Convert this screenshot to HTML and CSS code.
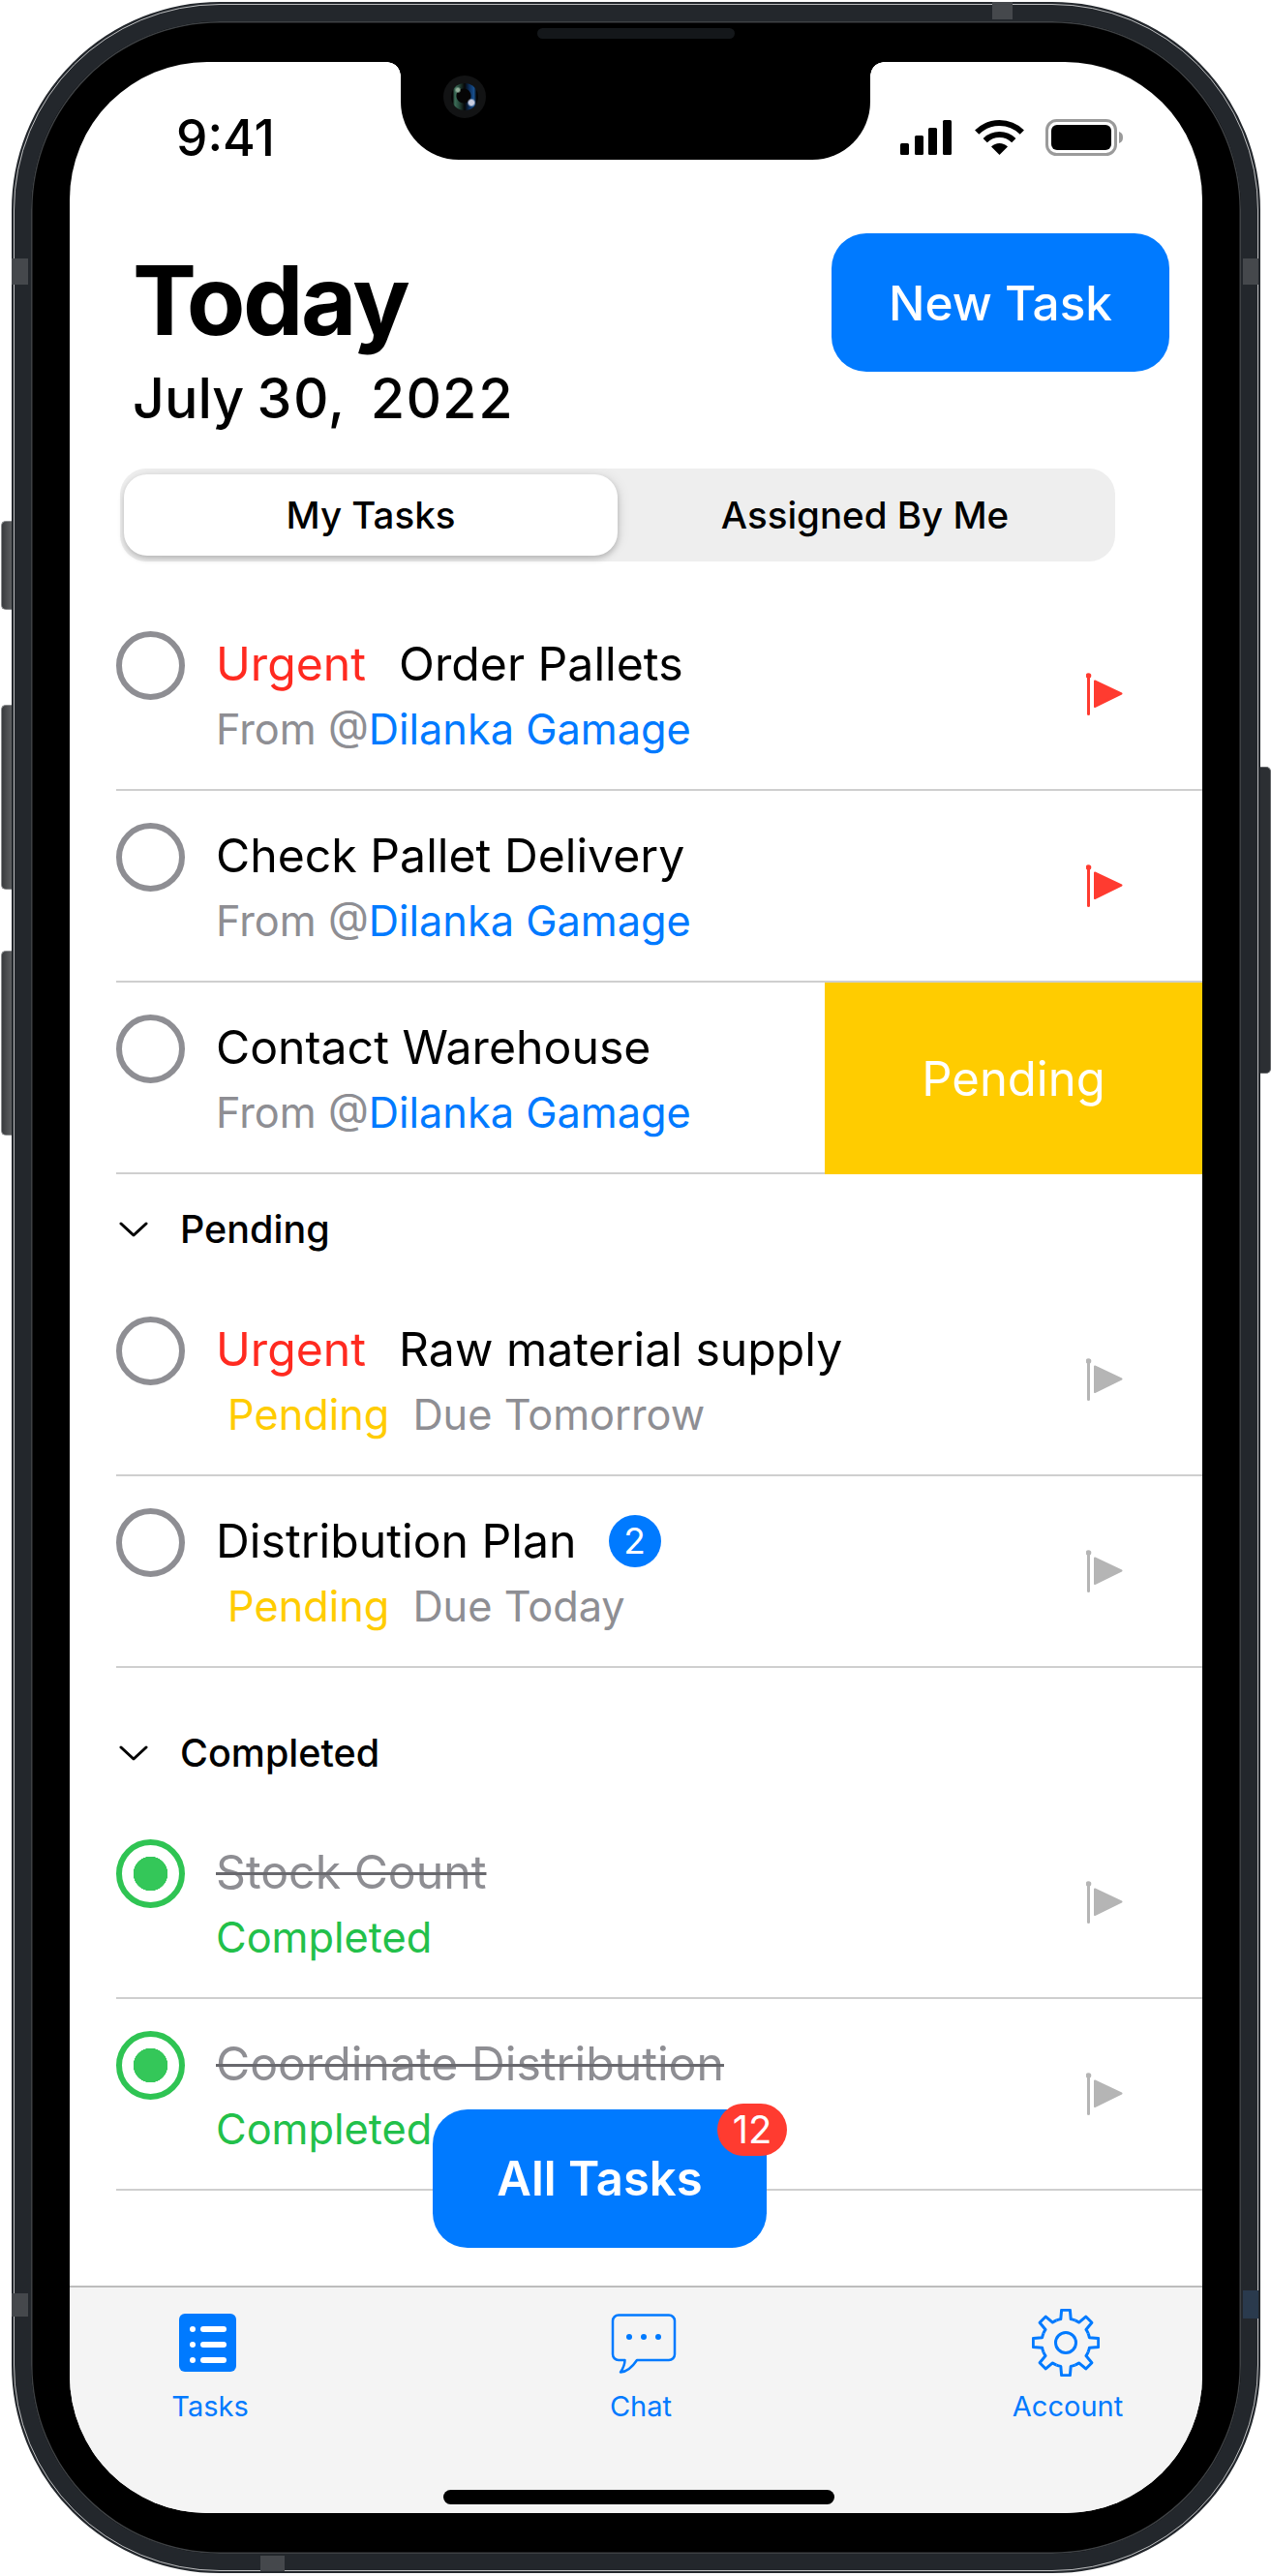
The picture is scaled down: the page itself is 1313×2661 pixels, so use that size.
FILE: index.html
```html
<!DOCTYPE html>
<html lang="en">
<head>
    <meta charset="UTF-8">
    <title>Today - Tasks</title>
    <link rel="stylesheet" href="styles.css">
</head>
<body>
    <div class="phone">
        <span class="side-btn side-mute"></span>
        <span class="side-btn side-up"></span>
        <span class="side-btn side-down"></span>
        <span class="side-btn side-power"></span>
        <span class="band band-top"></span>
        <span class="band band-left1"></span>
        <span class="band band-left2"></span>
        <span class="band band-right1"></span>
        <span class="band band-right2"></span>
        <span class="band band-bottom"></span>
        <span class="speaker"></span>

        <div class="screen">
            <div class="notch"><span class="camera"></span></div>

            <div class="status-bar">
                <span class="time">9:41</span>
                <div class="status-icons">
                    <svg class="signal" width="53" height="36" viewBox="0 0 53 36">
                        <rect x="0" y="24" width="9" height="12" rx="1.5"/>
                        <rect x="15" y="16" width="9" height="20" rx="1.5"/>
                        <rect x="29" y="8" width="9" height="28" rx="1.5"/>
                        <rect x="44" y="0" width="9" height="36" rx="1.5"/>
                    </svg>
                    <svg class="wifi" width="51" height="36" viewBox="0 0 51 36">
                        <path d="M2.2 12.7A33 33 0 0 1 48.8 12.7" fill="none" stroke="#000" stroke-width="6"/>
                        <path d="M10.7 21.2A21 21 0 0 1 40.3 21.2" fill="none" stroke="#000" stroke-width="6"/>
                        <path d="M25.5 36L17 27.5A12 12 0 0 1 34 27.5Z"/>
                    </svg>
                    <svg class="battery" width="81" height="38" viewBox="0 0 81 38">
                        <rect x="1.5" y="1.5" width="71" height="35" rx="10" fill="none" stroke="#9a9a9a" stroke-width="3"/>
                        <rect x="6" y="6" width="62" height="26" rx="6"/>
                        <path d="M76 13c3 1 4 3 4 6s-1 5-4 6z" fill="#9a9a9a"/>
                    </svg>
                </div>
            </div>

            <div class="header">
                <div class="heading">
                    <h1>Today</h1>
                    <p class="date">July 30,&nbsp; 2022</p>
                </div>
                <button class="new-task">New Task</button>
            </div>

            <div class="segment">
                <div class="seg-item active">My Tasks</div>
                <div class="seg-item">Assigned By Me</div>
            </div>

            <div class="list">
                <div class="row">
                    <span class="check"></span>
                    <div class="text">
                        <div class="title"><span class="urgent">Urgent</span>Order Pallets</div>
                        <div class="sub">From @<span class="who">Dilanka Gamage</span></div>
                    </div>
                    <svg class="flag red" width="38" height="44" viewBox="0 0 38 44"><use href="#flag-shape"/></svg>
                </div>
                <div class="row">
                    <span class="check"></span>
                    <div class="text">
                        <div class="title">Check Pallet Delivery</div>
                        <div class="sub">From @<span class="who">Dilanka Gamage</span></div>
                    </div>
                    <svg class="flag red" width="38" height="44" viewBox="0 0 38 44"><use href="#flag-shape"/></svg>
                </div>
                <div class="row">
                    <span class="check"></span>
                    <div class="text">
                        <div class="title">Contact Warehouse</div>
                        <div class="sub">From @<span class="who">Dilanka Gamage</span></div>
                    </div>
                    <div class="swipe">Pending</div>
                </div>

                <div class="section">
                    <svg width="30" height="16" viewBox="0 0 30 16"><path d="M2 2l13 12L28 2" fill="none" stroke="#000" stroke-width="3" stroke-linecap="round" stroke-linejoin="round"/></svg>
                    <span>Pending</span>
                </div>
                <div class="row">
                    <span class="check"></span>
                    <div class="text">
                        <div class="title"><span class="urgent">Urgent</span>Raw material supply</div>
                        <div class="sub indent"><span class="pending">Pending</span>Due Tomorrow</div>
                    </div>
                    <svg class="flag" width="38" height="44" viewBox="0 0 38 44"><use href="#flag-shape"/></svg>
                </div>
                <div class="row">
                    <span class="check"></span>
                    <div class="text">
                        <div class="title">Distribution Plan<span class="count">2</span></div>
                        <div class="sub indent"><span class="pending">Pending</span>Due Today</div>
                    </div>
                    <svg class="flag" width="38" height="44" viewBox="0 0 38 44"><use href="#flag-shape"/></svg>
                </div>

                <div class="section section-gap">
                    <svg width="30" height="16" viewBox="0 0 30 16"><path d="M2 2l13 12L28 2" fill="none" stroke="#000" stroke-width="3" stroke-linecap="round" stroke-linejoin="round"/></svg>
                    <span>Completed</span>
                </div>
                <div class="row">
                    <span class="check done"></span>
                    <div class="text">
                        <div class="title struck">Stock Count</div>
                        <div class="sub completed">Completed</div>
                    </div>
                    <svg class="flag" width="38" height="44" viewBox="0 0 38 44"><use href="#flag-shape"/></svg>
                </div>
                <div class="row">
                    <span class="check done"></span>
                    <div class="text">
                        <div class="title struck">Coordinate Distribution</div>
                        <div class="sub completed">Completed</div>
                    </div>
                    <svg class="flag" width="38" height="44" viewBox="0 0 38 44"><use href="#flag-shape"/></svg>
                </div>
            </div>

            <button class="all-tasks">All Tasks<span class="all-count">12</span></button>

            <div class="tabbar">
                <div class="tab">
                    <svg class="icon-tasks" width="59" height="60" viewBox="0 0 59 60">
                        <rect width="59" height="60" rx="6" fill="#007aff"/>
                        <g fill="#fff">
                            <circle cx="14" cy="16" r="3"/><rect x="22" y="13" width="27" height="6" rx="3"/>
                            <circle cx="14" cy="32" r="3"/><rect x="22" y="29" width="27" height="6" rx="3"/>
                            <circle cx="14" cy="48" r="3"/><rect x="22" y="45" width="27" height="6" rx="3"/>
                        </g>
                    </svg>
                    <span>Tasks</span>
                </div>
                <div class="tab">
                    <svg class="icon-chat" width="68" height="62" viewBox="0 0 68 62">
                        <path d="M8 1.5H60a6 6 0 0 1 6 6V42a6 6 0 0 1-6 6H27C23 54 17 60 10 60.500C13 56 14.500 52 14.500 48H8a6 6 0 0 1-6-6V7.500a6 6 0 0 1 6-6z" fill="none" stroke="#007aff" stroke-width="2.500" stroke-linejoin="round"/>
                        <g fill="#007aff"><circle cx="19" cy="24" r="3"/><circle cx="34" cy="24" r="3"/><circle cx="49" cy="24" r="3"/></g>
                    </svg>
                    <span>Chat</span>
                </div>
                <div class="tab">
                    <svg class="icon-gear" width="70" height="70" viewBox="0 0 70 70" fill="none" stroke="#007aff" stroke-width="3" stroke-linejoin="round">
                        <path id="gear-tooth" d="M25.400 11.900A25 25 0 0 1 29.800 10.600L30.600 1.300H39.400L40.200 10.600A25 25 0 0 1 44.600 11.900"/>
                        <use href="#gear-tooth" transform="rotate(45 35 35)"/>
                        <use href="#gear-tooth" transform="rotate(90 35 35)"/>
                        <use href="#gear-tooth" transform="rotate(135 35 35)"/>
                        <use href="#gear-tooth" transform="rotate(180 35 35)"/>
                        <use href="#gear-tooth" transform="rotate(225 35 35)"/>
                        <use href="#gear-tooth" transform="rotate(270 35 35)"/>
                        <use href="#gear-tooth" transform="rotate(315 35 35)"/>
                        <circle cx="35" cy="35" r="10.500"/>
                    </svg>
                    <span>Account</span>
                </div>
            </div>
            <div class="home-bar"></div>
        </div>
    </div>

    <svg width="0" height="0" class="defs">
        <symbol id="flag-shape" viewBox="0 0 38 44">
            <rect x="1" y="3" width="3" height="41" rx="1.500"/>
            <circle cx="2.500" cy="3" r="2.800"/>
            <path d="M9 8.500L36.500 21.500L9 35Z" stroke-linejoin="round" stroke-width="2" stroke="currentColor"/>
        </symbol>
    </svg>
</body>
</html>
```

FILE: styles.css
```css
* {
    box-sizing: border-box;
}

body {
    margin: 0;
    height: 2661px;
    overflow: hidden;
    background: #fff;
    font-family: Inter, "Liberation Sans", sans-serif;
    color: #000;
}

.defs {
    position: absolute;
}

/* device frame */
.phone {
    position: relative;
    width: 1290px;
    height: 2656px;
    margin: 2px 0 0 12px;
    padding: 42px 40px;
    background: #000;
    border: 20px solid #23272c;
    border-radius: 215px;
    box-shadow: inset 0 0 0 1.5px #3e4144;
}

.phone::before {
    content: "";
    position: absolute;
    inset: -18px;
    border: 1px solid rgba(255, 255, 255, 0.7);
    border-radius: 213px;
}

.side-btn {
    position: absolute;
    width: 11px;
    background: linear-gradient(90deg, #3a3c3f, #5c5e60);
    border: 1px solid #8a8c8e;
    border-right: none;
}

.side-mute { left: -31px; top: 516px; height: 92px; border-radius: 5px 0 0 5px; }
.side-up { left: -31px; top: 706px; height: 191px; border-radius: 5px 0 0 5px; }
.side-down { left: -31px; top: 960px; height: 191px; border-radius: 5px 0 0 5px; }

.side-power {
    right: -31px;
    top: 770px;
    height: 317px;
    background: #2c2f33;
    border: 1px solid #66686b;
    border-left: none;
    border-radius: 0 5px 5px 0;
}

.band {
    position: absolute;
    background: #45484c;
}

.band-top { top: -20px; left: 993px; width: 21px; height: 18px; }
.band-left1 { left: -20px; top: 245px; width: 17px; height: 27px; }
.band-left2 { left: -20px; top: 2347px; width: 17px; height: 24px; }
.band-right1 { right: -18px; top: 245px; width: 16px; height: 27px; }
.band-right2 { right: -18px; top: 2344px; width: 16px; height: 29px; background: #2a3a4d; }
.band-bottom { bottom: -18px; left: 237px; width: 25px; height: 16px; }

.speaker {
    position: absolute;
    top: 7px;
    left: 523px;
    width: 204px;
    height: 11px;
    background: #14171a;
    border-radius: 6px;
}

.screen {
    position: relative;
    display: flex;
    flex-direction: column;
    width: 1170px;
    height: 2532px;
    background: #fff;
    border-radius: 142px;
    overflow: hidden;
}

.notch {
    position: absolute;
    top: 0;
    left: 342px;
    width: 485px;
    height: 101px;
    background: #000;
    border-radius: 0 0 60px 60px;
}

.notch::before,
.notch::after {
    content: "";
    position: absolute;
    top: 0;
    width: 14px;
    height: 14px;
}

.notch::before {
    left: -14px;
    background: radial-gradient(circle at 0 100%, transparent 13.5px, #000 14px);
}

.notch::after {
    right: -14px;
    background: radial-gradient(circle at 100% 100%, transparent 13.5px, #000 14px);
}

.camera {
    position: absolute;
    top: 14px;
    left: 44px;
    width: 44px;
    height: 44px;
    border-radius: 50%;
    background: #121314;
}

.camera::before {
    content: "";
    position: absolute;
    inset: 8px;
    border-radius: 50%;
    background:
        radial-gradient(circle at 21px 20px, #c9cde0 0 2.500px, transparent 4.500px),
        radial-gradient(circle at 7px 7px, #93b09b 0 1.500px, transparent 3.500px),
        radial-gradient(circle at 13px 13px, #050505 0 7px, transparent 8px),
        linear-gradient(90deg, #050505 6%, #3d6f59 14%, #25463a 30%, #060606 50%, #0c3060 68%, #184f8c 84%, #050505 94%);
}

/* status bar */
.status-bar {
    display: flex;
    align-items: center;
    justify-content: space-between;
    flex-shrink: 0;
    height: 156px;
    padding: 0 81px 0 110px;
}

.time {
    font-size: 51.500px;
    font-weight: 500;
}

.status-icons {
    display: flex;
    align-items: center;
    gap: 24px;
}

.wifi,
.signal,
.battery {
    display: block;
}

.battery {
    margin-left: -2px;
}

/* header */
.header {
    display: flex;
    justify-content: space-between;
    align-items: flex-start;
    flex-shrink: 0;
    height: 264px;
    padding: 21px 34px 0 65px;
}

.heading {
    padding-top: 14px;
}

h1 {
    margin: 0;
    font-size: 99px;
    line-height: 110px;
    font-weight: 700;
    letter-spacing: -2.500px;
}

.date {
    margin: 14px 0 0;
    font-size: 57.300px;
    line-height: 64px;
    font-weight: 500;
    font-variant-numeric: tabular-nums;
    word-spacing: -2px;
}

.new-task {
    width: 349px;
    height: 143px;
    background: #007aff;
    color: #fff;
    border: none;
    border-radius: 36px;
    font-family: inherit;
    font-size: 49.500px;
    font-weight: 500;
}

/* segmented control */
.segment {
    display: flex;
    flex-shrink: 0;
    width: 1028px;
    height: 96px;
    margin-left: 52px;
    padding: 6px 3px 6px 4px;
    background: #eee;
    border-radius: 27px;
}

.seg-item {
    flex: 1;
    text-align: center;
    font-size: 38.500px;
    font-weight: 500;
    line-height: 84px;
}

.seg-item.active {
    flex: none;
    width: 510px;
    background: #fff;
    border-radius: 24px;
    box-shadow: 0 3px 6px rgba(0, 0, 0, 0.22), 4px 0 12px rgba(0, 0, 0, 0.06);
}

/* task list */
.list {
    flex-shrink: 0;
    margin: 39px 0 0 48px;
}

.row {
    position: relative;
    display: flex;
    align-items: flex-start;
    height: 198px;
    padding-right: 82px;
    border-bottom: 2px solid #cfcfcf;
}

.check {
    flex-shrink: 0;
    width: 71px;
    height: 71px;
    margin-top: 33px;
    border: 6px solid #8e8e93;
    border-radius: 50%;
}

.check.done {
    border-color: #2fc453;
    background: radial-gradient(circle, #34c759 17.5px, #fff 18px);
}

.text {
    margin: 39px 0 0 32px;
}

.title {
    display: flex;
    align-items: center;
    font-size: 48.200px;
    line-height: 56px;
}

.urgent {
    margin-right: 34px;
    color: #ff2a20;
}

.count {
    width: 54px;
    height: 54px;
    margin-left: 33px;
    border-radius: 50%;
    background: #007aff;
    color: #fff;
    font-size: 37px;
    line-height: 54px;
    text-align: center;
}

.sub {
    margin-top: 14px;
    font-size: 43.300px;
    line-height: 50px;
    color: #8e8e93;
}

.sub.indent {
    padding-left: 12px;
}

.who {
    color: #007aff;
}

.pending {
    margin-right: 24px;
    color: #ffcc00;
}

.completed {
    color: #22c04a;
}

.struck {
    color: #8e8e93;
    text-decoration: line-through;
    text-decoration-color: #68686d;
    text-decoration-thickness: 3px;
}

.flag {
    align-self: center;
    margin-left: auto;
    color: #b5b5b5;
    fill: #b5b5b5;
}

.flag.red {
    color: #ff3b30;
    fill: #ff3b30;
}

.swipe {
    position: absolute;
    top: 0;
    right: 0;
    bottom: -2px;
    width: 390px;
    display: flex;
    align-items: center;
    justify-content: center;
    background: #ffcc00;
    color: #fff;
    font-size: 49px;
}

.section {
    display: flex;
    align-items: center;
    gap: 33px;
    height: 114px;
    padding: 0 0 0 3px;
    font-size: 39.500px;
    font-weight: 500;
}

.section-gap {
    height: 144px;
    padding-top: 32px;
}

/* floating button */
.all-tasks {
    position: absolute;
    top: 2115px;
    left: 375px;
    width: 345px;
    height: 143px;
    background: #007aff;
    color: #fff;
    border: none;
    border-radius: 36px;
    font-family: inherit;
    font-size: 49px;
    font-weight: 600;
}

.all-count {
    position: absolute;
    top: -6px;
    right: -21px;
    width: 72px;
    height: 54px;
    border-radius: 27px;
    background: #ff3b30;
    font-size: 40px;
    font-weight: 400;
    line-height: 54px;
}

/* tab bar */
.tabbar {
    display: flex;
    margin-top: auto;
    height: 235px;
    padding: 25px 0 0 65px;
    background: #f4f4f4;
    border-top: 2px solid #bdbdbd;
}

.tab {
    display: flex;
    flex-direction: column;
    align-items: center;
    justify-content: space-between;
    width: 160px;
    height: 115px;
    color: #007aff;
    font-size: 29px;
}

.tab + .tab {
    margin-left: 285px;
}

.tab:last-child {
    margin-left: 281px;
}

.icon-tasks {
    margin: 2px 6px 0 0;
}

.icon-chat {
    margin: 2px 0 0 5px;
}

.icon-gear {
    margin: -3px 4px 0 0;
}

.home-bar {
    position: absolute;
    bottom: 9px;
    left: 386px;
    width: 404px;
    height: 15px;
    background: #000;
    border-radius: 8px;
}
```
